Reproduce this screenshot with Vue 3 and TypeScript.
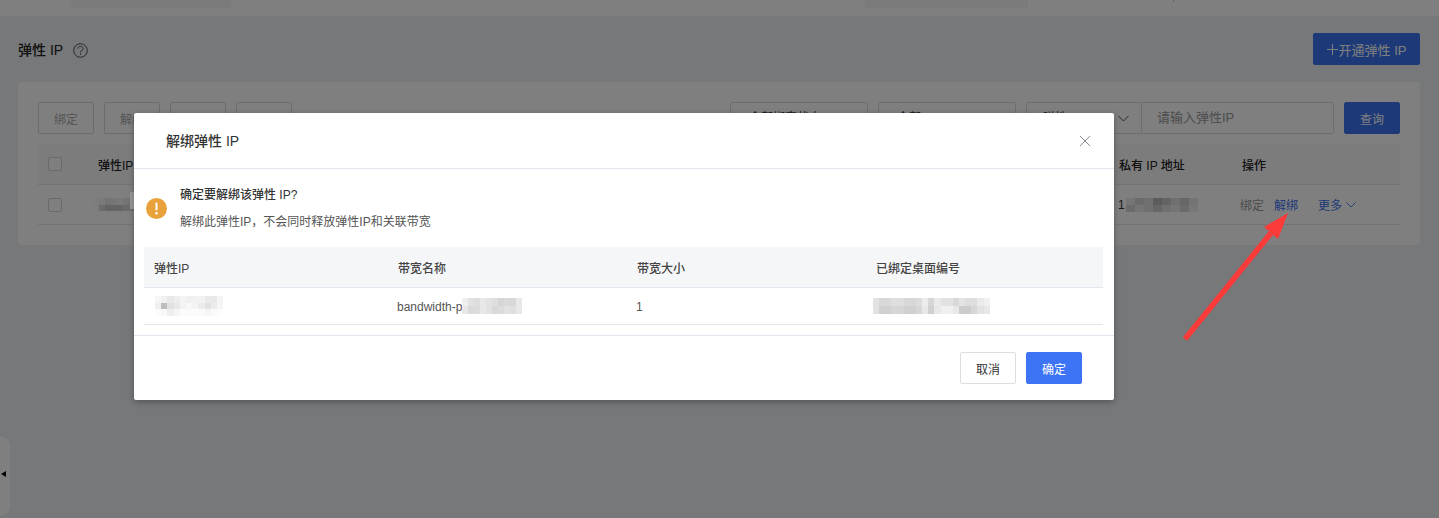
<script setup lang="ts">
interface Mosaic { cell: number; cols: number; rowH: number; grays: number[] }
const toCells = (m: Mosaic) => m.grays.map((g) => `rgb(${g},${g},${g})`)
const gridOf = (m: Mosaic) => ({ gridTemplateColumns: `repeat(${m.cols}, ${m.cell}px)`, gridAutoRows: `${m.rowH}px` })

const tableMosaic: Mosaic = { cell: 6, cols: 7, rowH: 6.5, grays: [250,245,232,236,242,232,226,250,214,200,200,200,212,222] }
const ipMosaic: Mosaic = { cell: 9, cols: 8, rowH: 7, grays: [235,215,225,185,200,225,205,232,215,235,225,205,225,235,215,238] }
const m1: Mosaic = { cell: 6.2, cols: 11, rowH: 6.4, grays: [246,240,232,238,244,240,242,242,234,232,244,240,190,225,232,244,248,244,236,226,236,246,252,248,238,246,252,250,252,250,246,250,252] }
const m2: Mosaic = { cell: 6, cols: 10, rowH: 8, grays: [240,226,222,232,226,222,214,218,216,232,232,218,220,232,226,216,220,226,222,232] }
const m3: Mosaic = { cell: 6.15, cols: 19, rowH: 8, grays: [226,216,216,222,222,216,216,220,236,214,234,226,226,216,228,222,222,234,240,226,208,208,214,214,208,208,214,232,208,232,240,240,232,204,204,214,226,232] }
</script>

<template>
  <div class="page">
    <div class="topbar">
      <span class="stub stub-a"></span>
      <span class="stub stub-b"></span>
      <span class="tick"></span>
    </div>

    <div class="title-row">
      <div class="title">
        <span>弹性 IP</span>
        <svg class="help" width="15" height="15" viewBox="0 0 15 15" fill="none" stroke="#444" stroke-width="0.9">
          <circle cx="7.5" cy="7.5" r="6.8" />
          <path d="M4.900 5.700c0-1.500 1.200-2.400 2.600-2.400s2.600.9 2.600 2.300c0 1.900-2.600 1.800-2.600 3.900" />
          <path d="M7.500 10.400v1.300" />
        </svg>
      </div>
      <button class="btn primary open">
        <svg width="11" height="11" viewBox="0 0 11 11" fill="none" stroke="#fff" stroke-width="1"><path d="M5.500 0v11M0 5.500h11" /></svg>
        <span>开通弹性 IP</span>
      </button>
    </div>

    <section class="card">
      <div class="toolbar">
        <div class="actions">
          <button class="btn disabled">绑定</button>
          <button class="btn disabled">解绑</button>
          <button class="btn disabled">释放</button>
          <button class="btn dark">退订</button>
        </div>
        <div class="filters">
          <div class="select s1">全部绑定状态</div>
          <div class="select s2">全部</div>
          <div class="combo">
            <div class="combo-type">
              <span>弹性IP</span>
              <svg width="11" height="11" viewBox="0 0 11 11" fill="none" stroke="#555" stroke-width="1"><path d="M.5 3l5 5 5-5" /></svg>
            </div>
            <div class="combo-input">请输入弹性IP</div>
          </div>
          <button class="btn primary query">查询</button>
        </div>
      </div>

      <div class="table head">
        <div class="c-check"><span class="checkbox"></span></div>
        <div class="c-ip">弹性IP</div>
        <div class="c-priv">私有 IP 地址</div>
        <div class="c-ops">操作</div>
      </div>
      <div class="table row">
        <div class="c-check"><span class="checkbox"></span></div>
        <div class="c-ip">
          <div class="mosaic" :style="gridOf(tableMosaic)">
            <i v-for="(c, i) in toCells(tableMosaic)" :key="i" :style="{ background: c }"></i>
          </div>
        </div>
        <div class="c-priv priv-val">
          <span>1</span>
          <div class="mosaic" :style="gridOf(ipMosaic)">
            <i v-for="(c, i) in toCells(ipMosaic)" :key="i" :style="{ background: c }"></i>
          </div>
        </div>
        <div class="c-ops ops">
          <span class="op-off">绑定</span>
          <span class="op-on">解绑</span>
          <span class="op-on more">更多
            <svg width="10" height="6" viewBox="0 0 10 6" fill="none" stroke="#3a72ee" stroke-width="0.9"><path d="M.5 .5l4.500 4.500L9.500 .5" /></svg>
          </span>
        </div>
      </div>
    </section>

    <div class="side-tab"><span class="tri"></span></div>

    <div class="mask"></div>
    <span class="strip"></span>

    <div class="modal">
      <header class="m-head">
        <span>解绑弹性 IP</span>
        <svg class="close" width="12" height="12" viewBox="0 0 12 12" fill="none" stroke="#8a8a92" stroke-width="1"><path d="M1 1l10 10M11 1L1 11" /></svg>
      </header>
      <div class="m-body">
        <div class="alert">
          <span class="alert-icon">
            <svg width="21" height="21" viewBox="0 0 21 21"><circle cx="10.500" cy="10.500" r="10.500" fill="#e9a23b" /><rect x="9.500" y="4.500" width="2" height="8" rx="1" fill="#fff" /><circle cx="10.500" cy="15.200" r="1.200" fill="#fff" /></svg>
          </span>
          <div class="alert-text">
            <div class="alert-title">确定要解绑该弹性 IP?</div>
            <div class="alert-desc">解绑此弹性IP，不会同时释放弹性IP和关联带宽</div>
          </div>
        </div>
        <div class="m-table m-thead">
          <div>弹性IP</div><div>带宽名称</div><div>带宽大小</div><div>已绑定桌面编号</div>
        </div>
        <div class="m-table m-tbody">
          <div class="cell-m1">
            <div class="mosaic" :style="gridOf(m1)">
              <i v-for="(c, i) in toCells(m1)" :key="i" :style="{ background: c }"></i>
            </div>
          </div>
          <div class="cell-band">
            <span>bandwidth-p</span>
            <div class="mosaic" :style="gridOf(m2)">
              <i v-for="(c, i) in toCells(m2)" :key="i" :style="{ background: c }"></i>
            </div>
          </div>
          <div class="cell-size">1</div>
          <div class="cell-m3">
            <div class="mosaic" :style="gridOf(m3)">
              <i v-for="(c, i) in toCells(m3)" :key="i" :style="{ background: c }"></i>
            </div>
          </div>
        </div>
      </div>
      <footer class="m-foot">
        <button class="btn cancel">取消</button>
        <button class="btn ok">确定</button>
      </footer>
    </div>

    <svg class="arrow" width="112" height="135" viewBox="0 0 112 135">
      <path d="M5 131 L91 25" stroke="#fb3a3a" stroke-width="5.500" fill="none" />
      <path d="M108 5 L84 19 L98 31 Z" fill="#fb3a3a" />
    </svg>
  </div>
</template>

<style scoped>
.page {
  position: relative;
  width: 1439px;
  height: 518px;
  overflow: hidden;
  background: #edf0f4;
  font-family: "Liberation Sans", "Noto Sans CJK SC", sans-serif;
  font-size: 12px;
  color: #333;
}
.topbar {
  height: 16px;
  background: #fff;
  display: flex;
  align-items: flex-start;
  box-sizing: border-box;
  padding-left: 71px;
}
.stub { display: block; height: 8px; background: #f7f7f8; }
.stub-a { width: 160px; }
.stub-b { width: 163px; margin-left: 634px; }
.tick { display: block; width: 1px; height: 2px; background: #ccc; margin-left: 145px; }
.title-row {
  display: flex;
  justify-content: space-between;
  align-items: center;
  padding: 17px 19px 0 18px;
  height: 32px;
}
.title { display: flex; align-items: center; gap: 10px; font-size: 14px; font-weight: 500; color: #222; line-height: 32px; padding-top: 1px; }
.help { display: block; margin-top: 1px; }
.btn {
  box-sizing: border-box;
  font: inherit;
  height: 32px;
  border-radius: 2px;
  border: 1px solid #ddd;
  background: #fff;
  padding: 0;
  text-align: center;
  color: #333;
}
.primary { background: #3a72ee; border-color: #3a72ee; color: #fff; }
.open { width: 107px; font-size: 13px; display: flex; align-items: center; justify-content: center; gap: 1px; }
.card {
  box-sizing: border-box;
  margin: 17px 19px 0 18px;
  height: 163px;
  background: #fff;
  border-radius: 4px;
  padding: 20px 20px 0;
}
.toolbar { display: flex; justify-content: space-between; height: 32px; margin-bottom: 10px; }
.actions { display: flex; gap: 10px; }
.actions .btn { width: 56px; }
.disabled { color: #aaa; border-color: #d8d8d8; }
.dark { color: #222; }
.filters { display: flex; }
.select, .combo-type, .combo-input { box-sizing: border-box; height: 32px; line-height: 30px; border: 1px solid #ddd; background: #fff; }
.select { border-radius: 2px; padding-left: 18px; }
.s1 { width: 138px; margin-right: 10px; }
.s2 { width: 138px; margin-right: 10px; }
.combo { display: flex; }
.combo-type { width: 115px; border-right: 0; display: flex; align-items: center; justify-content: space-between; padding: 0 12px 0 16px; border-radius: 2px 0 0 2px; }
.combo-input { width: 193px; padding-left: 15px; color: #999; font-size: 13px; border-radius: 0 2px 2px 0; }
.query { width: 56px; margin-left: 10px; }
.table { display: flex; align-items: center; width: 1362px; box-sizing: border-box; }
.head { height: 41px; background: #f8f9fb; font-weight: 500; color: #222; border-bottom: 1px solid #e4e6f0; }
.row { height: 40px; border-bottom: 1px solid #e4e6f0; }
.c-check { width: 50px; padding-left: 10px; box-sizing: border-box; }
.c-ip { width: 1021px; box-sizing: border-box; padding-left: 10px; }
.c-priv { width: 123px; box-sizing: border-box; padding-left: 10px; }
.c-ops { width: 168px; box-sizing: border-box; padding-left: 10px; }
.checkbox { display: block; width: 14px; height: 14px; box-sizing: border-box; border: 1px solid #d4d4d4; border-radius: 2px; background: #fff; }
.row .c-ip { padding-left: 5px; }
.mosaic { display: grid; }
.mosaic i { display: block; }
.priv-val { display: flex; align-items: center; padding-left: 9px; }
.priv-val .mosaic { margin-left: 1px; }
.ops { display: flex; align-items: center; padding-left: 8px; }
.op-off { color: #999; }
.op-on { color: #3a72ee; margin-left: 10px; }
.more { margin-left: 20px; display: flex; align-items: center; gap: 4px; }
.side-tab {
  position: absolute;
  left: 0;
  top: 436px;
  width: 10px;
  height: 80px;
  background: #fff;
  border-radius: 0 10px 10px 0;
}
.tri {
  position: absolute;
  left: 1px;
  top: 35px;
  width: 0;
  height: 0;
  border-top: 3.500px solid transparent;
  border-bottom: 3.500px solid transparent;
  border-right: 5px solid #000;
}
.mask { position: absolute; inset: 0; background: rgba(0, 0, 0, 0.5); }
.strip { position: absolute; left: 130px; top: 192px; width: 4px; height: 17px; background: #9a9a9a; }
.modal {
  position: absolute;
  left: 134px;
  top: 113px;
  width: 980px;
  height: 287px;
  background: #fff;
  border-radius: 2px;
  box-shadow: 0 2px 6px rgba(0, 0, 0, 0.3);
  display: flex;
  flex-direction: column;
}
.m-head {
  height: 56px;
  box-sizing: border-box;
  border-bottom: 1px solid #e4e4ee;
  padding: 0 23px 2px 32px;
  display: flex;
  align-items: center;
  justify-content: space-between;
  font-size: 14px;
  font-weight: 500;
  color: #333;
}
.close { margin-top: 2px; }
.m-body { padding: 0 11px 0 10px; height: 167px; box-sizing: border-box; border-bottom: 1px solid #e4e4ee; }
.alert { display: flex; align-items: center; height: 78px; }
.alert-icon { display: block; height: 21px; width: 36px; margin-left: 2px; margin-right: -1px; }
.alert-text { margin-top: 0; line-height: 26px; margin-left: -1px; }
.alert-title { font-weight: 500; color: #333; }
.alert-desc { color: #555; margin-top: 1px; }
.m-table { display: grid; grid-template-columns: 244px 239px 239px 1fr; align-items: center; }
.m-thead { height: 41px; background: #f5f6f8; border-bottom: 1px solid #e4e4ee; box-sizing: border-box; font-weight: 500; color: #444; }
.m-thead > div { padding-left: 10px; }
.m-tbody { height: 37px; border-bottom: 1px solid #e4e4ee; color: #555; box-sizing: border-box; }
.cell-m1 { padding-left: 11px; }
.cell-band { display: flex; align-items: center; padding-left: 9px; }
.cell-band span { padding-top: 2px; }
.cell-size { padding-left: 9px; padding-top: 2px; }
.cell-m3 { padding-left: 7px; }
.m-foot { flex: 1; display: flex; justify-content: flex-end; align-items: center; gap: 10px; padding: 0 32px 0 0; }
.cancel { width: 56px; border-color: #ddd; }
.ok { width: 56px; background: #3d74f6; border-color: #3d74f6; color: #fff; }
.arrow { position: absolute; left: 1180px; top: 208px; }
</style>
